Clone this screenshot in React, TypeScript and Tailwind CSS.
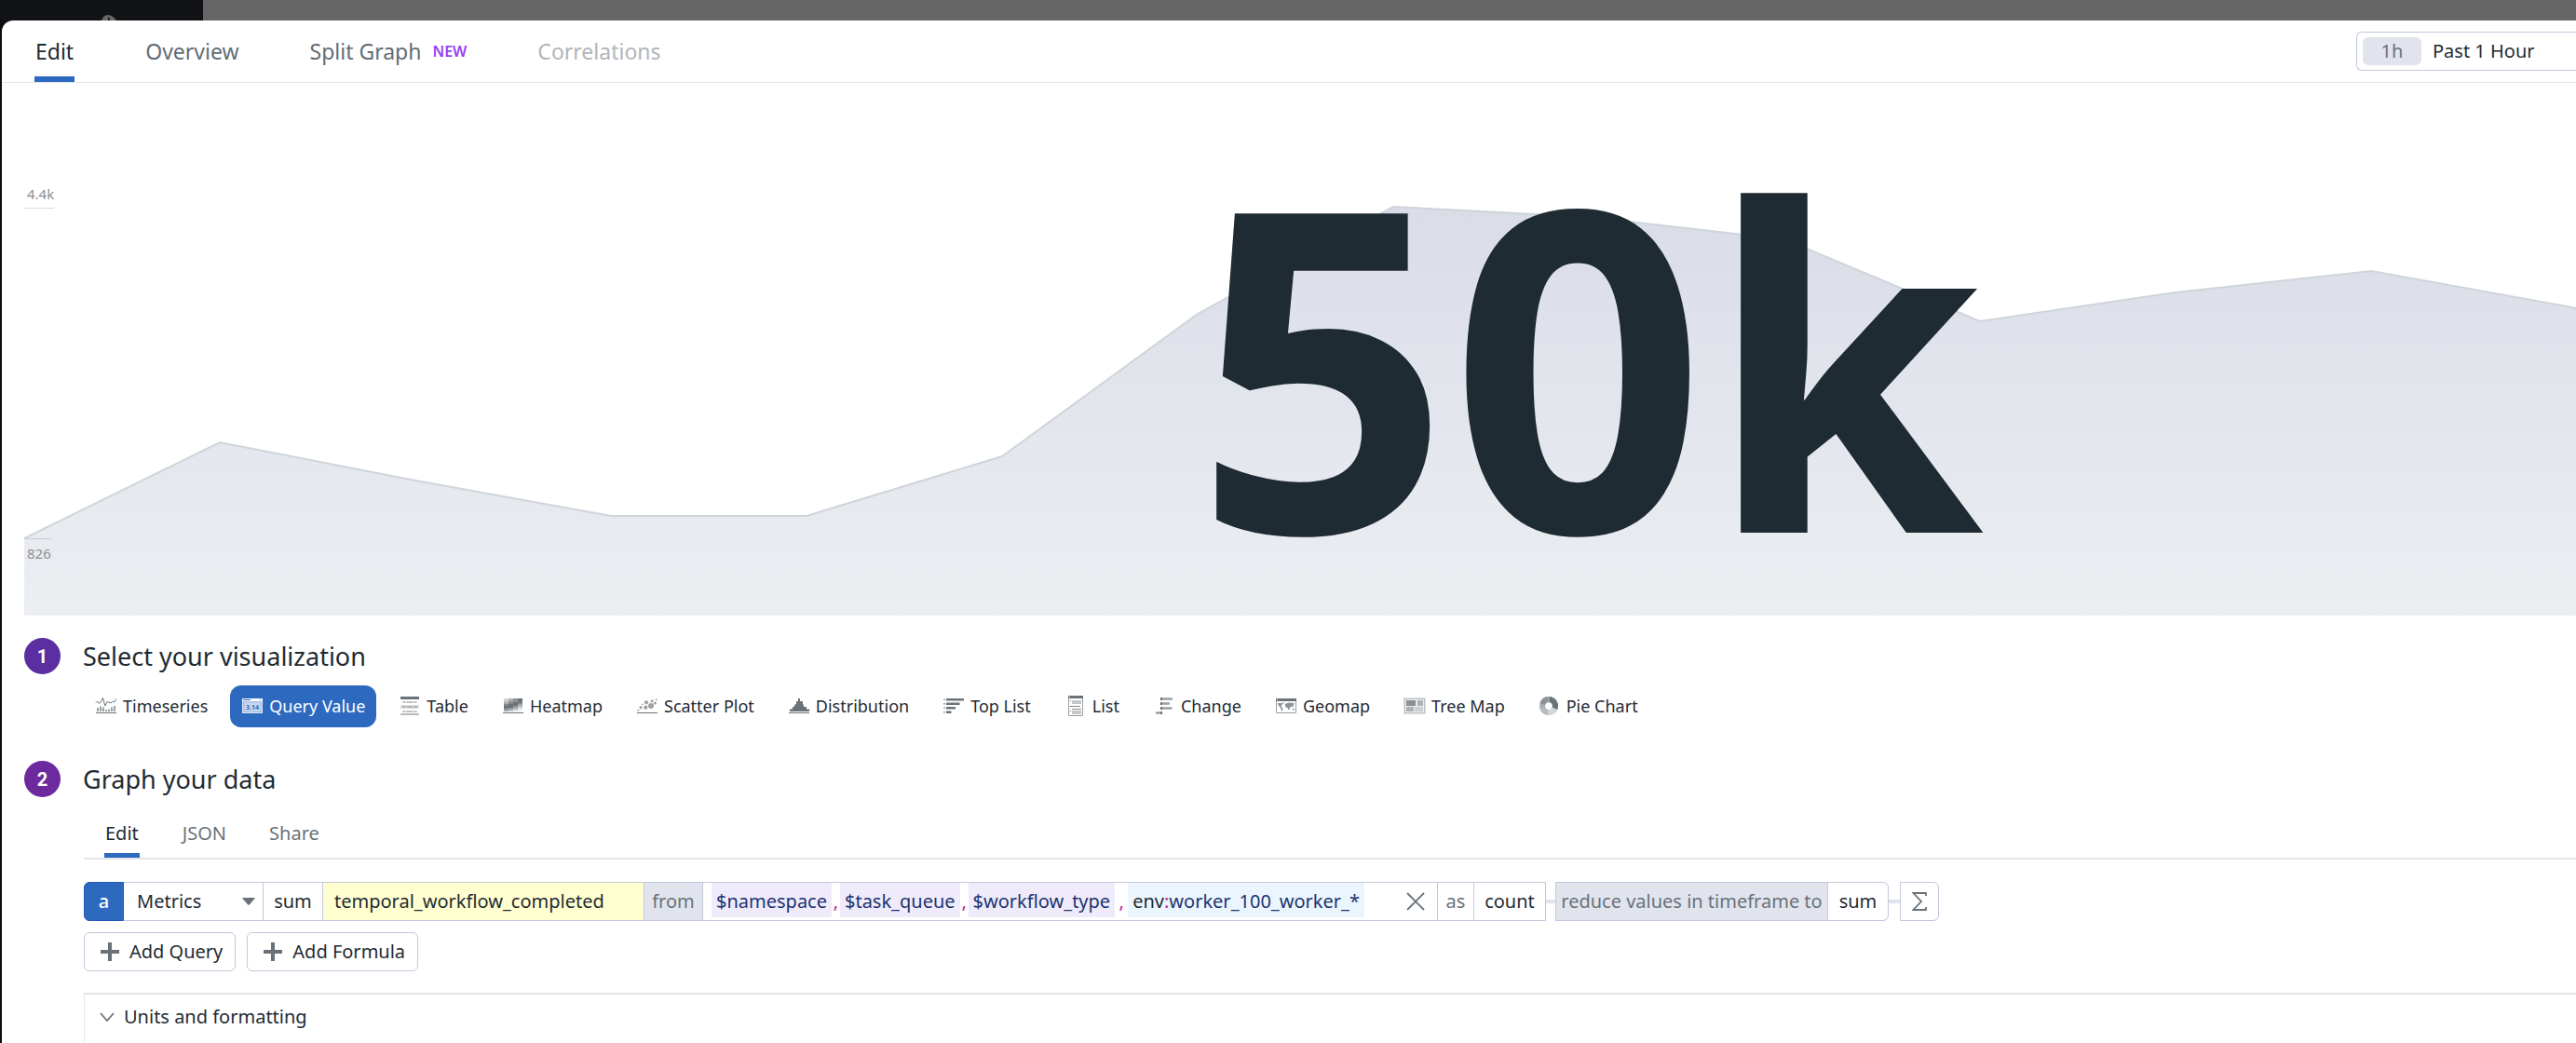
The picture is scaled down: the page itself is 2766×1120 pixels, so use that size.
import type { ReactNode } from "react";

const DARK = "#6b7278";

function Icon({ children }: { children: ReactNode }) {
  return (
    <svg viewBox="0 0 24 23" className="h-[23px] w-6 shrink-0" aria-hidden="true">
      {children}
    </svg>
  );
}

const TimeseriesIcon = () => (
  <Icon>
    <path d="M1 7.5 2.5 6 4.5 8.5 6 7 8.5 2.5 10.8 11 13 6.5 14.5 7 17 8 18.8 6.2 20.5 7 23 3.5" fill="none" stroke={DARK} strokeWidth="1" />
    <path d="M2 13h2v4H2zM5 11.5h2V17H5zM8 12.500h2V17H8zM11 15h2v2h-2zM14 14.500h2V17h-2zM17 12.500h2V17h-2zM20 11h2v6h-2z" fill="#9a9fa3" />
    <path d="M1 18h22v1H1z" fill={DARK} />
  </Icon>
);

const QueryValueIcon = () => (
  <Icon>
    <path d="M1 3h22v16H1z" fill="#a9c1e6" />
    <path d="M1 3h22v3H1z" fill="#fff" />
    <path d="M2 4h8v1H2zM20 4h1v1h-1z" fill="#2d69bf" />
    <path d="M1.500 6v12.500h21V6" fill="none" stroke="#dfe8f6" />
    <path d="M3.500 7.500h17v9h-17z" fill="#c6d6ef" />
    <text x="12" y="14.500" textAnchor="middle" fontSize="7" fontWeight="700" fill="#2d69bf">
      3.14
    </text>
  </Icon>
);

const TableIcon = () => (
  <Icon>
    <path d="M2 1h20v3H2z" fill={DARK} />
    <path d="M4 6h16v2H4zM4 16h16v2H4z" fill="#d9dadb" />
    <path d="M5 6h2v2H5zM9 6h6v2H9zM17 6h2v2h-2zM5 16h2v2H5zM9 16h6v2H9zM17 16h2v2h-2z" fill="#bfc2c4" />
    <path d="M2 10h20v4H2z" fill="#dcddde" />
    <path d="M4 11h4v2H4zM9 11h6v2H9zM16 11h4v2h-4z" fill="#b1b4b6" />
    <path d="M2 19h20v2H2z" fill="#b9bbbd" />
  </Icon>
);

const heat = [
  ["#d8d9db", "#b3b6b9", "#8d9296", "#6b7278"],
  ["#c3c5c8", "#a0a4a7", "#8d9296", "#6b7278"],
  ["#a7abae", "#82878c", "#6b7278", "#82878c"],
  ["#82878c", "#6b7278", "#6b7278", "#a0a4a7"],
  ["#6b7278", "#6b7278", "#959a9d", "#c3c5c8"],
  ["#82878c", "#959a9d", "#b3b6b9", "#e0e1e2"],
  ["#a7abae", "#c3c5c8", "#e0e1e2", "#f0f0f1"],
];

const HeatmapIcon = () => (
  <Icon>
    {heat.map((row, r) => row.map((fill, c) => <rect key={`${r}-${c}`} x={2 + c * 5} y={3 + r * 2} width="5" height="2" fill={fill} />))}
    <path d="M1 18h22v1H1z" fill={DARK} />
  </Icon>
);

const dots = [
  [2.3, 15.7, 1],
  [5, 12.7, 1.6],
  [6.7, 9.3, 0.9],
  [10.3, 12.7, 2.1],
  [11, 7.3, 2.1],
  [16, 11, 3],
  [17, 5.7, 1.5],
  [20.3, 8, 1.5],
  [21.7, 4.2, 1],
];

const ScatterIcon = () => (
  <Icon>
    {dots.map(([x, y, r]) => (
      <circle key={x} cx={x} cy={y} r={r} fill="#9da1a4" />
    ))}
    <path d="M1 18h22v1H1z" fill={DARK} />
  </Icon>
);

const DistributionIcon = () => (
  <Icon>
    <path d="M2 17v-2.500h3V12h2V9.500h2V6h2V3h2v3h3v3.500h1V12h3v2.500h3V17z" fill={DARK} />
    <path d="M1 18h22v1H1z" fill={DARK} />
  </Icon>
);

const TopListIcon = () => (
  <Icon>
    <path d="M4 3h19v2.500H4zM4 7.500h14.500V10H4zM4 12h10v2.500H4zM4 16.500h5.500V19H4z" fill={DARK} />
    <path d="M1 3.500h2V5H1zM1 8h2v1.500H1zM1 12.500h2V14H1zM1 17h2v1.500H1z" fill="#9a9fa3" />
  </Icon>
);

const ListIcon = () => (
  <Icon>
    <path d="M4.500.500h15v21h-15z" fill="#fff" stroke="#9a9fa3" />
    <path d="M4 0h16v3H4z" fill={DARK} />
    <path d="M5 1h1v1H5z" fill="#fff" />
    <path d="M8 5h10v4H8zM8 16h10v4H8z" fill="#c5c8ca" />
    <path d="M6 5h1v1H6zM6 11h1v1H6zM6 16h1v1H6z" fill={DARK} />
    <path d="M7 11h10v1H7zM8 14h10v1H8z" fill="#85898d" />
  </Icon>
);

const ChangeIcon = () => (
  <Icon>
    <path d="M9 3.500h11M9 8.500h8M9 13.500h10.500M4 18.500h5" stroke="#9a9fa3" strokeWidth="2.500" strokeLinecap="round" />
    <path d="M8 2h2v3H8zM8 7h2v3H8zM8 12h2v3H8zM8 17h2v3H8z" fill={DARK} />
  </Icon>
);

const GeomapIcon = () => (
  <Icon>
    <path d="M1.500 3.500h21v15h-21z" fill="#fff" stroke="#9a9fa3" />
    <path d="M1 3h22v3H1z" fill={DARK} />
    <path d="M2 4h1v1H2z" fill="#fff" />
    <path d="M3 8h4l2-.5-1 2-1.500 1.500L7 12l1.500 1.500L8 16l-1 1-.5-3L5 12l-1.500-2zM9 7.500h1.500L9.500 9zM11 9l2-1 3-.5 4 .5 1 1-1.500 1 .5 1-1.500 1.500-1-1-1 .5-.5 2-1.500 1.500-1-2.500-2-.5-.5-1.500zM19 14h2v1.500h-2z" fill="#8d9296" />
  </Icon>
);

const TreeMapIcon = () => (
  <Icon>
    <path d="M0 2h24v18H0z" fill="#dcdee0" />
    <path d="M1 3h22v16H1z" fill="#bfc2c5" />
    <path d="M2 4h20v14H2z" fill="#ededee" />
    <path d="M3 5h10v6H3z" fill="#8a9094" />
    <path d="M15 5h6v6h-6zM3 12h8v5H3z" fill="#aeb2b5" />
    <path d="M12 12h9v5h-9z" fill="#cdd0d2" />
  </Icon>
);

const PieIcon = () => (
  <Icon>
    <g fill="none" strokeWidth="6">
      <circle cx="11" cy="11" r="7" stroke="#a9adb0" />
      <path d="M11 4A7 7 0 0 1 17.400 13.800" stroke={DARK} />
      <path d="M17.400 13.800A7 7 0 0 1 11 18" stroke="#d0d3d5" />
      <path d="M11 18A7 7 0 0 1 4.300 13" stroke="#b9bcbf" />
      <path d="M4.300 9A7 7 0 0 1 11 4" stroke="#8d9296" />
    </g>
    <path d="M11 1v6M11 15v6M13.500 14.500l2.500 4.500" stroke="#fff" strokeWidth=".5" />
  </Icon>
);

const visualizations: { label: string; icon: ReactNode; active?: boolean }[] = [
  { label: "Timeseries", icon: <TimeseriesIcon /> },
  { label: "Query Value", icon: <QueryValueIcon />, active: true },
  { label: "Table", icon: <TableIcon /> },
  { label: "Heatmap", icon: <HeatmapIcon /> },
  { label: "Scatter Plot", icon: <ScatterIcon /> },
  { label: "Distribution", icon: <DistributionIcon /> },
  { label: "Top List", icon: <TopListIcon /> },
  { label: "List", icon: <ListIcon /> },
  { label: "Change", icon: <ChangeIcon /> },
  { label: "Geomap", icon: <GeomapIcon /> },
  { label: "Tree Map", icon: <TreeMapIcon /> },
  { label: "Pie Chart", icon: <PieIcon /> },
];

const series = "0,489 210,386 420,427 630,465 840,465 1050,401 1260,248 1470,133 1680,144 1890,168 2100,256 2310,225 2520,202 2730,240 2740,242";

function Header() {
  return (
    <header className="flex h-[67px] items-stretch justify-between border-b border-[#e1e3ec] pl-[35px]">
      <div role="tablist" className="flex gap-[76px] text-[23px] text-[#626c75]">
        <button role="tab" aria-selected="true" className="border-b-[6px] border-[#2d69bf] px-px pt-1.5 text-[#1f2b33]">
          Edit
        </button>
        <button role="tab" aria-selected="false">
          Overview
        </button>
        <button role="tab" aria-selected="false" className="flex items-center gap-3">
          Split Graph <span className="text-base font-semibold text-[#9640f5]">NEW</span>
        </button>
        <button role="tab" aria-selected="false" disabled className="text-[#b1b5ba]">
          Correlations
        </button>
      </div>
      <button className="mt-3 flex h-[42px] w-[236px] items-center gap-3 rounded-l-md border border-r-0 border-[#c3c8dd] pl-1.5 text-[20px]">
        <span className="flex h-[30px] w-[63px] items-center justify-center rounded-md bg-[#e1e4ed] text-[#69727a]">1h</span>
        Past 1 Hour
      </button>
    </header>
  );
}

function ValueChart() {
  return (
    <section aria-label="Query value" className="grid h-[572px] pl-6">
      <svg viewBox="0 0 2740 572" preserveAspectRatio="none" className="col-start-1 row-start-1 h-[572px] w-full">
        <defs>
          <linearGradient id="area" x1="0" y1="0" x2="0" y2="1">
            <stop offset="0" stopColor="#dadce6" />
            <stop offset=".3" stopColor="#dfe2ea" />
            <stop offset="1" stopColor="#ebeff2" />
          </linearGradient>
        </defs>
        <polygon points={`${series} 2740,572 0,572`} fill="url(#area)" />
        <polyline points={series} fill="none" stroke="#cfd5db" strokeWidth="2" />
      </svg>
      <div className="col-start-1 row-start-1 flex flex-col items-start text-[15px] leading-5 text-[#8b9095]">
        <span className="mt-[109px] border-b border-[#d9dbde] pb-[5px] pl-[3px]">4.4k</span>
        <span className="mt-[354px] border-t border-[#c9ced4] pt-[5px] pl-[3px]">826</span>
      </div>
      <div className="col-start-1 row-start-1 flex items-center justify-center pt-[22px] pl-[620px]">
        <span className="text-[480px] leading-none font-bold text-[#1f2b33]">50k</span>
      </div>
    </section>
  );
}

function StepHeading({ step, color, children }: { step: number; color: string; children: ReactNode }) {
  return (
    <div className="flex items-center gap-6">
      <span className={`flex size-[39px] items-center justify-center rounded-full font-['Roboto'] text-[20px] font-bold text-white ${color}`}>{step}</span>
      <h2 className="text-[27px] leading-[39px]">{children}</h2>
    </div>
  );
}

function Chip({ children }: { children: ReactNode }) {
  return <span className="h-[37px] bg-[#f0ebfb] px-[5px] leading-[39px] text-[#1b3470]">{children}</span>;
}

function Comma() {
  return <span className="w-[9px] text-center text-[#c026a0]">,</span>;
}

function QueryRow() {
  const cell = "flex items-center border-y border-r border-[#c3c8dd]";
  return (
    <div className="mt-6 flex h-[42px] items-stretch">
      <button className="w-[43px] rounded-l-md border border-[#2458b8] bg-[#2d69bf] font-medium text-white">a</button>
      <div className={`${cell} relative w-[150px]`}>
        <select aria-label="Data source" className="h-full w-full appearance-none bg-transparent pl-3.5">
          <option>Metrics</option>
        </select>
        <svg viewBox="0 0 14 8" className="pointer-events-none absolute right-2 h-2 w-3.5" aria-hidden="true">
          <path d="M1 0h12q1.200 0 .5 1L8 7.300q-1 1-2 0L.5 1Q-.2 0 1 0z" fill="#69727a" />
        </svg>
      </div>
      <button className={`${cell} w-16 justify-center`}>sum</button>
      <input aria-label="Metric" defaultValue="temporal_workflow_completed" className="w-[345px] border-y border-r border-[#c3c8dd] bg-[#ffffd0] pl-3 outline-none" />
      <span className={`${cell} w-[63px] justify-center bg-[#e1e4ed] text-[#69727a]`}>from</span>
      <div className={`${cell} w-[789px] pl-[9px]`}>
        <div className="flex h-full items-start leading-[39px]">
          <Chip>$namespace</Chip>
          <Comma />
          <Chip>$task_queue</Chip>
          <Comma />
          <Chip>$workflow_type</Chip>
          <span className="w-[14px] text-center text-[#c026a0]">,</span>
          <span className="h-[37px] bg-[#ebf5fd] px-[5px] text-[#1b3470]">
            <span className="text-[#1f2b33]">env</span>
            <span className="text-[#c026a0]">:</span>worker_100_worker_*
          </span>
        </div>
        <button aria-label="Clear filter" className="mr-[13px] ml-auto">
          <svg viewBox="0 0 20 20" className="size-5" aria-hidden="true">
            <path d="M1 1l18 18M19 1 1 19" stroke="#69727a" strokeWidth="1.800" />
          </svg>
        </button>
      </div>
      <span className={`${cell} w-[39px] justify-center text-[#69727a]`}>as</span>
      <button className={`${cell} w-[77px] justify-center`}>count</button>
      <span className="h-1 w-2.5 self-center bg-[#e1e4ed]" />
      <span className="flex w-[293px] items-center justify-center border border-[#c3c8dd] bg-[#e1e4ed] text-[#69727a]">reduce values in timeframe to</span>
      <button className={`${cell} w-[65px] justify-center rounded-r-md`}>sum</button>
      <span className="h-1 w-3 self-center bg-[#e1e4ed]" />
      <button aria-label="Apply function" className="flex w-[42px] items-center justify-center rounded-r-md border border-[#c3c8dd]">
        <svg viewBox="0 0 16 20" className="h-5 w-4" aria-hidden="true">
          <path d="M15 4V1H1.500L10 10 1.500 19H15v-3" fill="none" stroke="#69727a" strokeWidth="1.800" />
        </svg>
      </button>
    </div>
  );
}

function AddButton({ children }: { children: ReactNode }) {
  return (
    <button className="flex h-[42px] items-center gap-[11px] rounded-md border border-[#c3c8dd] pr-[13px] pl-[17px]">
      <svg viewBox="0 0 20 20" className="size-5" aria-hidden="true">
        <path d="M10 0v20M0 10h20" stroke="#69727a" strokeWidth="4" />
      </svg>
      {children}
    </button>
  );
}

export default function App() {
  return (
    <div className="flex h-screen flex-col overflow-hidden bg-[#0c0c12] font-['Noto_Sans',sans-serif] text-[#1f2b33]">
      <div className="flex h-[22px] shrink-0 bg-[#666666]">
        <div className="flex w-[218px] items-end justify-center overflow-hidden bg-[#101216] pl-4">
          <svg viewBox="0 0 18 6" className="h-1.5 w-[18px]" aria-hidden="true">
            <path d="M1 6Q3 0 8 0t9 6z" fill="#666" />
            <path d="M8 6V3l1-1 1 4z" fill="#101216" />
          </svg>
        </div>
      </div>
      <main className="ml-0.5 flex flex-1 flex-col rounded-tl-xl bg-white">
        <Header />
        <ValueChart />
        <div className="mt-6 flex flex-1 flex-col pl-6">
          <StepHeading step={1} color="bg-[#5b2ea1]">
            Select your visualization
          </StepHeading>
          <div className="mt-3 ml-16 flex gap-3">
            {visualizations.map(({ label, icon, active }) => (
              <button
                key={label}
                aria-pressed={!!active}
                className={`flex h-[45px] items-center gap-1.5 rounded-xl px-3 text-[18px] whitespace-nowrap ${active ? "bg-[#2d69bf] text-white" : ""}`}
              >
                {icon}
                {label}
              </button>
            ))}
          </div>
          <div className="mt-9">
            <StepHeading step={2} color="bg-[#6d2a9e]">
              Graph your data
            </StepHeading>
          </div>
          <div className="mt-4 ml-16 flex flex-1 flex-col text-[20px]">
            <div role="tablist" className="flex h-[51px] gap-[46px] border-b-2 border-[#e1e5eb] pl-[22px] text-[#69727a]">
              <button role="tab" aria-selected="true" className="border-b-[5px] border-[#2d69bf] px-px pt-px text-[#1f2b33]">
                Edit
              </button>
              <button role="tab" aria-selected="false" className="pb-[3px]">
                JSON
              </button>
              <button role="tab" aria-selected="false" className="pb-[3px]">
                Share
              </button>
            </div>
            <QueryRow />
            <div className="mt-3 flex gap-3">
              <AddButton>Add Query</AddButton>
              <AddButton>Add Formula</AddButton>
            </div>
            <div className="mt-[23px] flex-1 border-t-2 border-l border-[#e1e5eb]">
              <button aria-expanded="true" className="flex h-12 items-center gap-2.5 pl-4">
                <svg viewBox="0 0 16 10" className="h-2.5 w-4" aria-hidden="true">
                  <path d="M1 1l7 8 7-8" fill="none" stroke="#69727a" strokeWidth="1.800" />
                </svg>
                Units and formatting
              </button>
            </div>
          </div>
        </div>
      </main>
    </div>
  );
}
